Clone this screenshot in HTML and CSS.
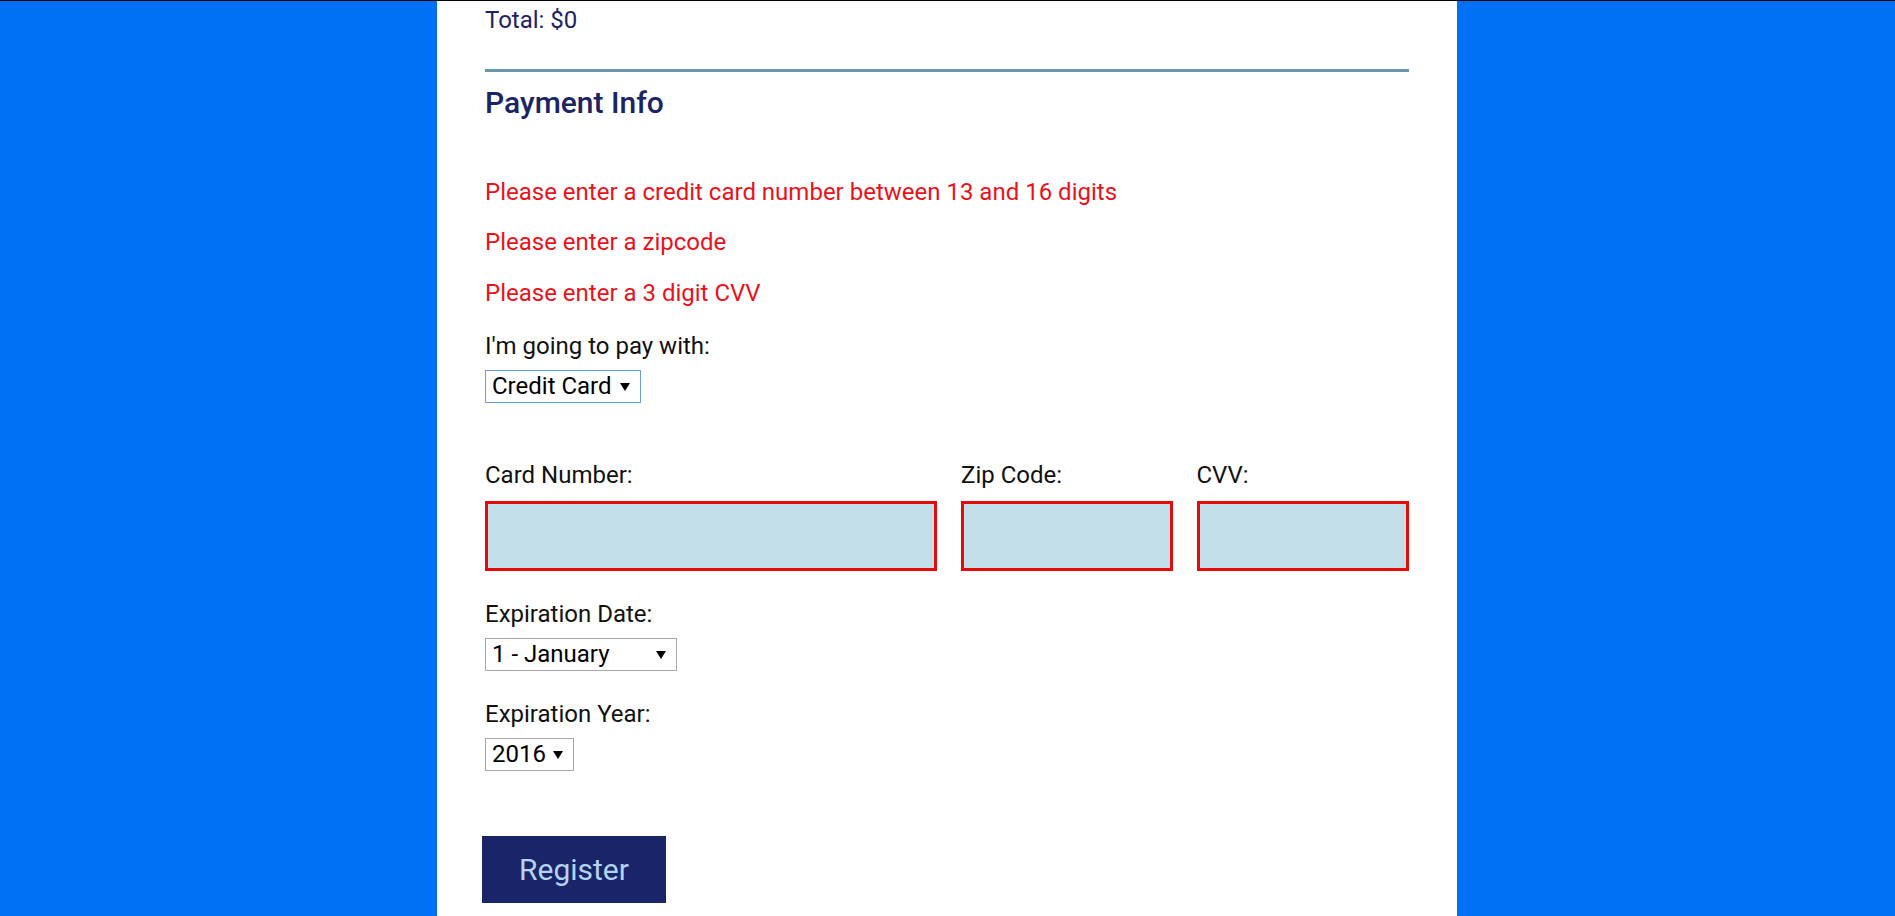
FILE: index.html
```html
<!DOCTYPE html>
<html lang="en">
<head>
<meta charset="utf-8">
<title>Payment Info</title>
<link rel="stylesheet" href="styles.css">
</head>
<body>
<main class="panel">
  <p class="total">Total: $0</p>
  <div class="rule"></div>
  <h2 class="section-title">Payment Info</h2>
  <div class="errors">
    <p class="error">Please enter a credit card number between 13 and 16 digits</p>
    <p class="error">Please enter a zipcode</p>
    <p class="error">Please enter a 3 digit CVV</p>
  </div>
  <div class="field field-pay">
    <label class="label" for="payment">I'm going to pay with:</label>
    <span class="select-wrap">
      <select id="payment" class="select select-focus select-pay">
        <option>Credit Card</option>
        <option>PayPal</option>
        <option>Bitcoin</option>
      </select>
    </span>
  </div>
  <div class="card-row">
    <div class="card-field">
      <label class="label" for="cc-num">Card Number:</label>
      <input id="cc-num" class="text-input" type="text">
    </div>
    <div class="card-field">
      <label class="label" for="zip">Zip Code:</label>
      <input id="zip" class="text-input" type="text">
    </div>
    <div class="card-field">
      <label class="label" for="cvv">CVV:</label>
      <input id="cvv" class="text-input" type="text">
    </div>
  </div>
  <div class="field field-month">
    <label class="label" for="exp-month">Expiration Date:</label>
    <span class="select-wrap">
      <select id="exp-month" class="select select-month">
        <option>1 - January</option>
        <option>2 - February</option>
      </select>
    </span>
  </div>
  <div class="field field-year">
    <label class="label" for="exp-year">Expiration Year:</label>
    <span class="select-wrap">
      <select id="exp-year" class="select select-year">
        <option>2016</option>
        <option>2017</option>
      </select>
    </span>
  </div>
  <button class="register" type="submit">Register</button>
</main>
</body>
</html>
```
FILE: styles.css
```css
html, body {
  margin: 0;
  padding: 0;
}

body {
  background: #0070f4;
  border-top: 1px solid #000;
  padding-right: 1px;
  font-family: Roboto, "Liberation Sans", Arial, sans-serif;
  font-size: 24px;
  color: #111;
}

.panel {
  width: 1020px;
  margin: 0 auto;
  box-sizing: border-box;
  min-height: 915px;
  background: #fff;
  padding: 5px 48px 0 48px;
  display: flex;
  flex-direction: column;
  align-items: flex-start;
}

.total {
  margin: 0;
  line-height: 28px;
  color: #1b2463;
}

.rule {
  align-self: stretch;
  height: 3px;
  background: #6b98a8;
  margin-top: 35px;
}

.section-title {
  margin: 14px 0 0 0;
  font-size: 30px;
  font-weight: 500;
  line-height: 34px;
  color: #1b2463;
}

.errors {
  margin-top: 57.5px;
  display: flex;
  flex-direction: column;
  gap: 22.5px;
}

.error {
  margin: 0;
  line-height: 28px;
  color: #e8121c;
}

.field {
  display: flex;
  flex-direction: column;
  align-items: flex-start;
}

.field-pay {
  margin-top: 25.5px;
}

.field-month {
  margin-top: 29.3px;
}

.field-year {
  margin-top: 28.8px;
}

.label {
  display: block;
  line-height: 28px;
  color: #111;
}

.select-wrap {
  position: relative;
  display: inline-block;
  margin-top: 10.3px;
}

.select-wrap::after {
  content: "";
  position: absolute;
  right: 11px;
  top: 13px;
  width: 0;
  height: 0;
  border-left: 5px solid transparent;
  border-right: 5px solid transparent;
  border-top: 8px solid #000;
  pointer-events: none;
}

.select {
  -webkit-appearance: none;
  appearance: none;
  display: block;
  box-sizing: border-box;
  height: 33px;
  margin: 0;
  padding: 0 0 0 6px;
  border: 1px solid #a9a9a9;
  border-radius: 0;
  background: #fff;
  font-family: Roboto, "Liberation Sans", Arial, sans-serif;
  font-size: 24px;
  line-height: 31px;
  color: #000;
}

.select-focus {
  border-color: #6a9fdc;
}

.select-pay {
  width: 156px;
}

.select-month {
  width: 192px;
}

.select-year {
  width: 89px;
}

.card-row {
  align-self: stretch;
  margin-top: 57.3px;
  display: grid;
  grid-template-columns: 451fr 211fr 212fr;
  column-gap: 24px;
}

.card-field {
  display: flex;
  flex-direction: column;
}

.text-input {
  display: block;
  box-sizing: border-box;
  width: 100%;
  height: 70px;
  margin: 12.2px 0 0 0;
  border: 3px solid #e20b0b;
  background: #c1dee9;
  border-radius: 0;
  padding: 0 8px;
  font-family: Roboto, "Liberation Sans", Arial, sans-serif;
  font-size: 24px;
}

.register {
  margin: 65px 0 0 -3px;
  width: 184px;
  height: 67px;
  border: none;
  border-radius: 0;
  background: #1a2468;
  color: #b3d3f3;
  font-family: Roboto, "Liberation Sans", Arial, sans-serif;
  font-size: 30px;
  font-weight: 400;
  padding: 0;
}
```
